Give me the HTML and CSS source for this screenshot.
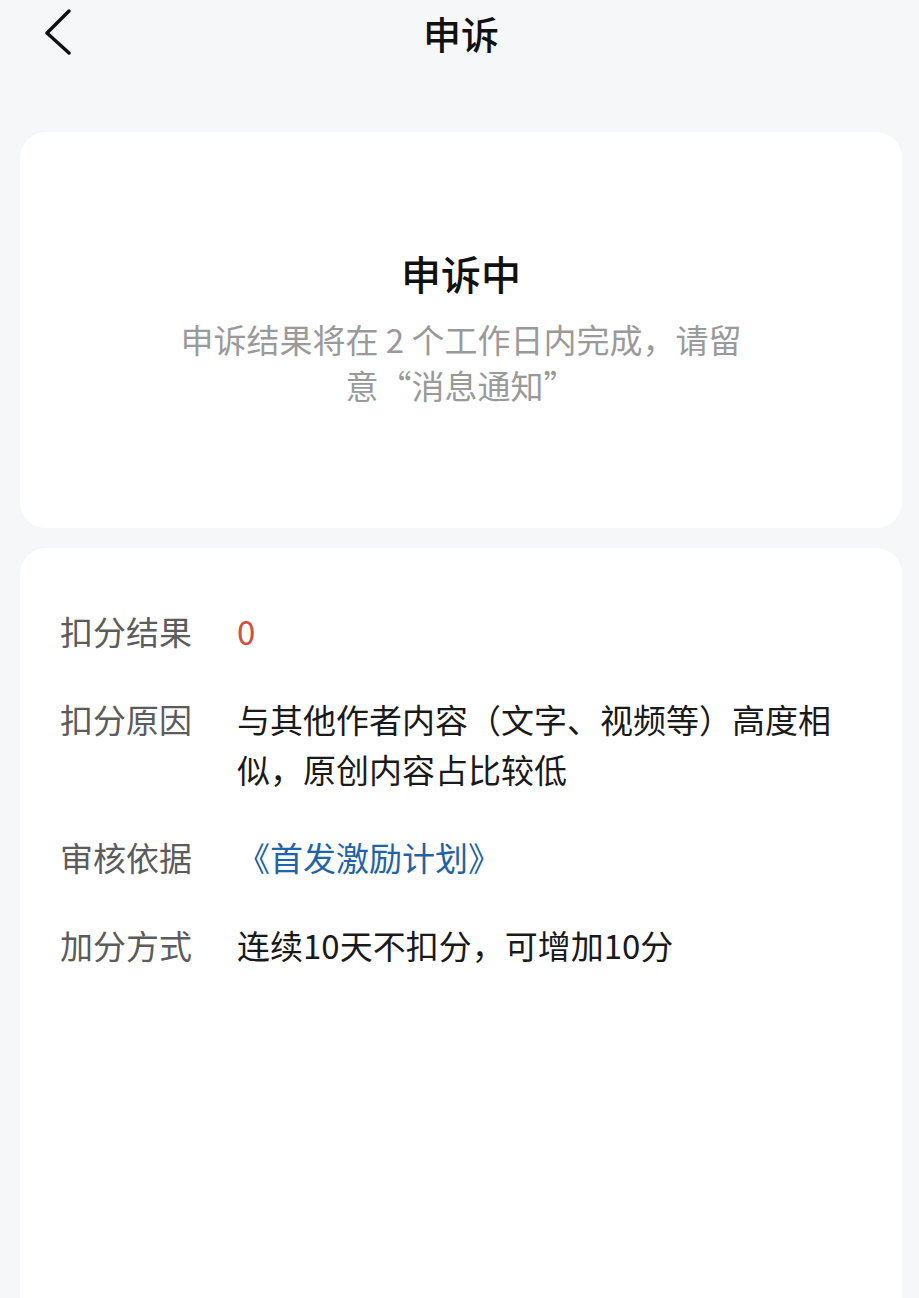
FILE: index.html
```html
<!DOCTYPE html>
<html lang="zh-CN">
<head>
<meta charset="utf-8">
<title>申诉</title>
<link rel="stylesheet" href="styles.css">
</head>
<body>
<div class="page">
  <header class="nav">
    <span class="back" aria-label="返回">
      <svg width="34" height="48" viewBox="0 0 34 48"><path d="M27 4 L5 26 L27 46" fill="none" stroke="#111" stroke-width="3.4" stroke-linecap="round" stroke-linejoin="round"/></svg>
    </span>
    <h1 class="nav-title">申诉</h1>
  </header>

  <section class="card status">
    <h2 class="status-title">申诉中</h2>
    <p class="status-desc">申诉结果将在 2 个工作日内完成，请留意“消息通知”</p>
  </section>

  <section class="card detail">
    <div class="row">
      <div class="label">扣分结果</div>
      <div class="value red">0</div>
    </div>
    <div class="row">
      <div class="label">扣分原因</div>
      <div class="value">与其他作者内容（文字、视频等）高度相似，原创内容占比较低</div>
    </div>
    <div class="row">
      <div class="label">审核依据</div>
      <div class="value link">《首发激励计划》</div>
    </div>
    <div class="row">
      <div class="label">加分方式</div>
      <div class="value">连续10天不扣分，可增加10分</div>
    </div>
  </section>
</div>
</body>
</html>
```

FILE: styles.css
```css
html, body {
  margin: 0;
  padding: 0;
  background: #f6f7f9;
}
body {
  font-family: "Noto Sans CJK SC", "Noto Sans", sans-serif;
  color: #111;
  overflow: hidden;
  height: 1298px;
}
.page {
  display: flex;
  flex-direction: column;
  padding: 0 17px 0 20px;
}
.nav {
  height: 66px;
  display: flex;
  align-items: center;
  justify-content: center;
  position: relative;
  margin-bottom: 66px;
}
.back {
  position: absolute;
  left: 22px;
  top: 7px;
  display: block;
}
.back svg { display: block; }
.nav-title {
  margin: 0;
  font-size: 38px;
  font-weight: 500;
  color: #111;
  line-height: 66px;
}
.card {
  background: #fff;
  border-radius: 26px;
}
.status {
  height: 396px;
  display: flex;
  flex-direction: column;
  align-items: center;
  justify-content: center;
  box-sizing: border-box;
  padding-bottom: 4px;
}
.status-title {
  margin: 0 0 18px;
  font-size: 40px;
  font-weight: 500;
  line-height: 50px;
  color: #111;
}
.status-desc {
  margin: 0;
  width: 590px;
  text-align: center;
  font-size: 33px;
  line-height: 46px;
  color: #9a9a9a;
}
.detail {
  margin-top: 20px;
  padding: 58px 40px 0 40px;
  height: 760px;
  display: flex;
  flex-direction: column;
  gap: 38px;
}
.row {
  display: flex;
  align-items: flex-start;
  font-size: 33px;
  line-height: 50px;
}
.label {
  width: 177px;
  flex: none;
  color: #5c5c5c;
}
.value {
  width: 610px;
  color: #1a1a1a;
}
.value.red { color: #d0503e; }
.value.link { color: #1f63a8; }
```
